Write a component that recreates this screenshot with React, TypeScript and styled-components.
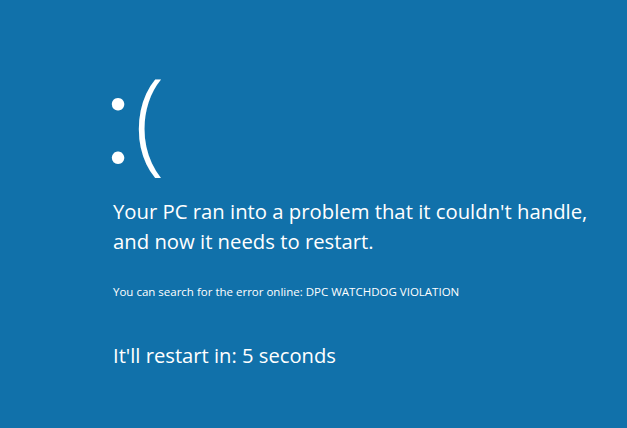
import styled, {createGlobalStyle} from "styled-components";

const GlobalStyle = createGlobalStyle`
    html, body {
        margin: 0;
        padding: 0;
        background-color: #1171AA;
    }
`

const App = () => {
    return (
        <>
            <GlobalStyle/>
            <Screen>
                <Face>
                    <Colon>:</Colon>
                    <Paren>(</Paren>
                </Face>
                <Message>
                    Your PC ran into a problem that it couldn't handle,
                    <br/>
                    and now it needs to restart.
                </Message>
                <ErrorCode>You can search for the error online: DPC WATCHDOG VIOLATION</ErrorCode>
                <Countdown>It'll restart in: 5 seconds</Countdown>
            </Screen>
        </>
    )
}

export default App


const Screen = styled.div`
    display: flex;
    flex-direction: column;
    align-items: flex-start;
    width: 627px;
    height: 428px;
    box-sizing: border-box;
    padding: 62px 0 0 113px;
    background-color: #1171AA;
    color: #FFFFFF;
    font-family: "Open Sans", "Noto Sans", sans-serif;
    overflow: hidden;
`

const Face = styled.div`
    display: flex;
    align-items: flex-start;
    height: 130px;
    margin-left: -11px;
`

const Colon = styled.span`
    font-family: Lato, "Open Sans", sans-serif;
    font-size: 134px;
    font-weight: 300;
    line-height: 130px;
    margin-top: -15px;
`

const Paren = styled.span`
    font-size: 112px;
    font-weight: 300;
    line-height: 130px;
    margin-left: 0;
    margin-top: -10px;
`

const Message = styled.div`
    margin-top: 4px;
    font-size: 20.3px;
    line-height: 30px;
`

const ErrorCode = styled.div`
    margin-top: 28px;
    font-size: 11.5px;
    line-height: 16px;
`

const Countdown = styled.div`
    margin-top: 43px;
    font-size: 20.2px;
    line-height: 24px;
`
